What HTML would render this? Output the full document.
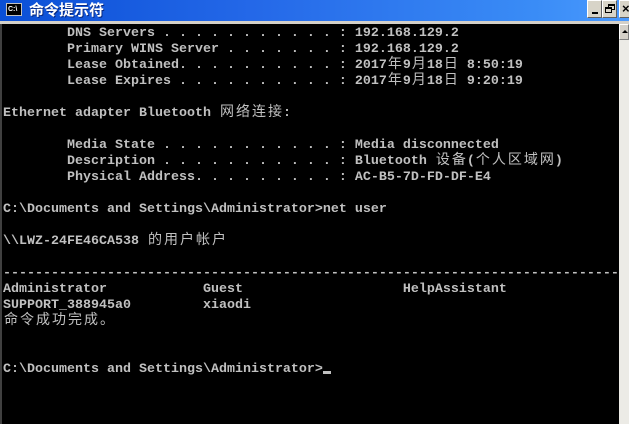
<!DOCTYPE html>
<html><head><meta charset="utf-8"><style>
*{margin:0;padding:0;box-sizing:border-box}
body{width:629px;height:424px;overflow:hidden;background:#000;position:relative;font-family:"Liberation Mono",monospace}
#title{position:absolute;left:0;top:0;width:629px;height:21px;background:linear-gradient(90deg,#0a4fd6 0%,#2468e8 40%,#3a8cf6 85%,#4a9aff 100%)}
#title .t{position:absolute;left:29px;top:1px;color:#fff;font:bold 15px "Noto Sans CJK SC",sans-serif;text-shadow:1px 1px #0a2a80;line-height:18px}
#ico{position:absolute;left:6px;top:3px;width:16px;height:13px;background:#000;border:1px solid #c0c0c0;color:#fff;font:bold 7px "Liberation Sans",sans-serif;line-height:11px;padding-left:1px}
.btn{position:absolute;top:0;width:15px;height:18px;background:#d8d4c8;border:1px solid #fff;border-right-color:#606060;border-bottom-color:#606060}
#strip{position:absolute;left:0;top:21px;width:629px;height:3px;background:#d4d0c8}
#con{position:absolute;left:0;top:24px;width:619px;height:400px;background:#000;border-left:2px solid #404040}
#sb{position:absolute;left:619px;top:24px;width:10px;height:400px;background:#ecebe6}
#sb .u{position:absolute;left:0;top:0;width:10px;height:16px;background:#d4d0c8;border:1px solid #fff;border-right-color:#808080;border-bottom-color:#808080}
#out{position:absolute;left:3px;top:26px;color:#c0c0c0;font:bold 13.33px/16px "Liberation Mono",monospace;white-space:pre}
#out div{height:16px;overflow:visible}
.c{display:inline-block;width:16px;height:16px;line-height:16px;vertical-align:top;position:relative;top:-3px;font-family:"Noto Sans CJK SC","WenQuanYi Zen Hei",sans-serif;font-weight:normal;font-size:14px;text-align:center}
.cur{display:inline-block;width:8px;height:3px;background:#c0c0c0;vertical-align:-2px}
</style></head><body>
<div id="title"><div id="ico">C:\</div><div class="t">命令提示符</div>
<div class="btn" style="left:587px"><div style="position:absolute;left:4px;top:11px;width:6px;height:2px;background:#000"></div></div>
<div class="btn" style="left:602px"><div style="position:absolute;left:5px;top:3px;width:7px;height:6px;border:1px solid #000;border-top-width:2px"></div><div style="position:absolute;left:2px;top:6px;width:7px;height:6px;border:1px solid #000;border-top-width:2px;background:#d8d4c8"></div></div>
<div class="btn" style="left:619px;width:12px"><span style="position:absolute;left:2px;top:0;font:bold 13px 'Liberation Sans';color:#000">×</span></div>
</div>
<div id="strip"></div>
<div id="con"></div>
<div id="sb"><div class="u"><div style="position:absolute;left:2px;top:5px;border:3px solid transparent;border-bottom:3px solid #000;border-top:0"></div></div></div>
<div id="out"><div>        DNS Servers . . . . . . . . . . . : 192.168.129.2</div><div>        Primary WINS Server . . . . . . . : 192.168.129.2</div><div>        Lease Obtained. . . . . . . . . . : 2017<span class="c">年</span>9<span class="c">月</span>18<span class="c">日</span> 8:50:19</div><div>        Lease Expires . . . . . . . . . . : 2017<span class="c">年</span>9<span class="c">月</span>18<span class="c">日</span> 9:20:19</div><div> </div><div>Ethernet adapter Bluetooth <span class="c">网</span><span class="c">络</span><span class="c">连</span><span class="c">接</span>:</div><div> </div><div>        Media State . . . . . . . . . . . : Media disconnected</div><div>        Description . . . . . . . . . . . : Bluetooth <span class="c">设</span><span class="c">备</span>(<span class="c">个</span><span class="c">人</span><span class="c">区</span><span class="c">域</span><span class="c">网</span>)</div><div>        Physical Address. . . . . . . . . : AC-B5-7D-FD-DF-E4</div><div> </div><div>C:\Documents and Settings\Administrator&gt;net user</div><div> </div><div>\\LWZ-24FE46CA538 <span class="c">的</span><span class="c">用</span><span class="c">户</span><span class="c">帐</span><span class="c">户</span></div><div> </div><div>-----------------------------------------------------------------------------</div><div>Administrator            Guest                    HelpAssistant</div><div>SUPPORT_388945a0         xiaodi</div><div><span class="c">命</span><span class="c">令</span><span class="c">成</span><span class="c">功</span><span class="c">完</span><span class="c">成</span><span class="c">。</span></div><div> </div><div> </div><div>C:\Documents and Settings\Administrator&gt;<span class="cur"></span></div></div>
</body></html>
